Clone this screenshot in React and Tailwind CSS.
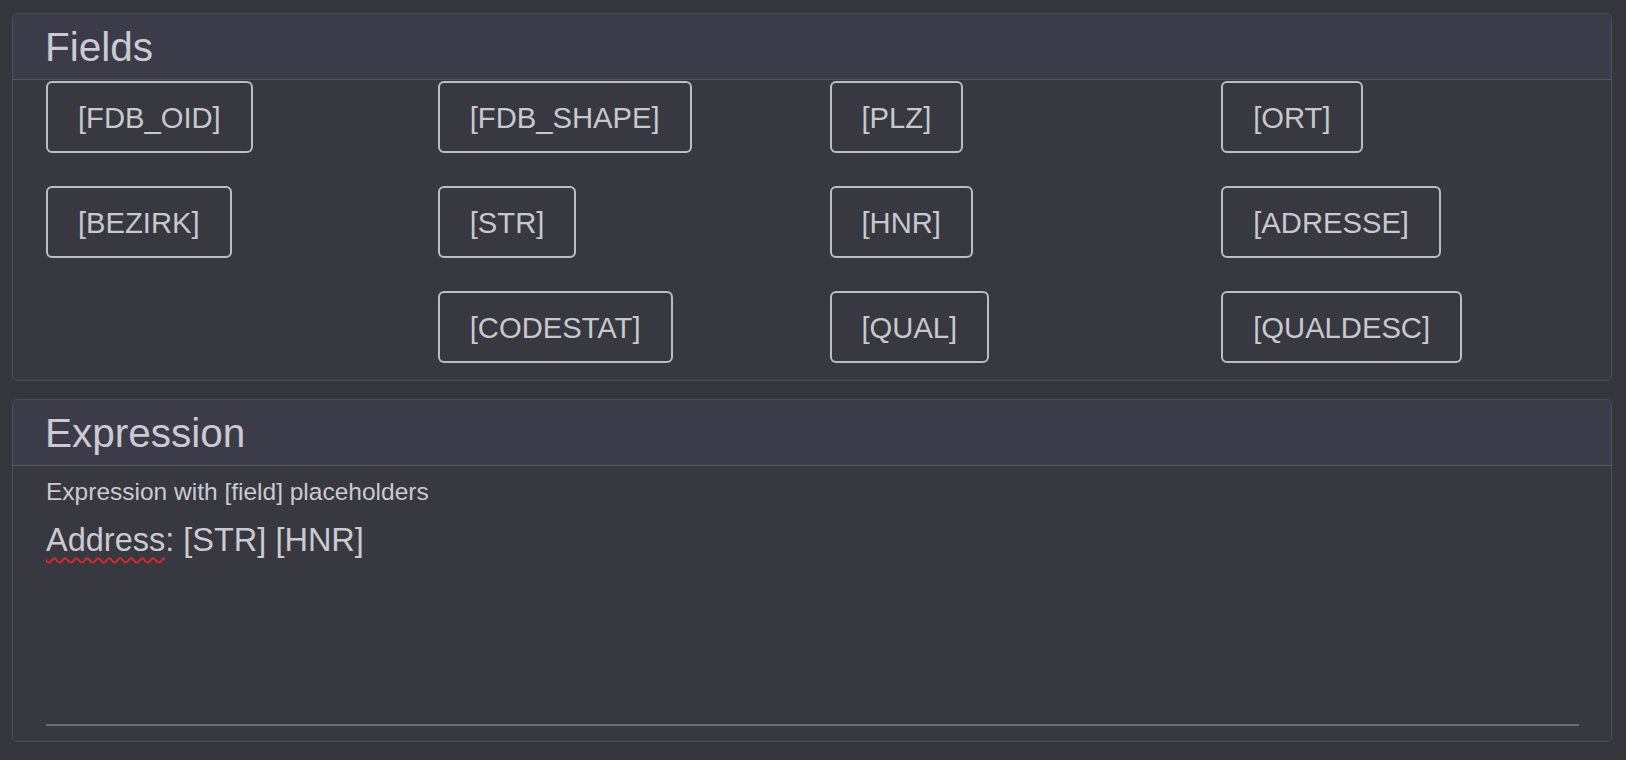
const fields = [
  "[FDB_OID]",
  "[FDB_SHAPE]",
  "[PLZ]",
  "[ORT]",
  "[BEZIRK]",
  "[STR]",
  "[HNR]",
  "[ADRESSE]",
  null,
  "[CODESTAT]",
  "[QUAL]",
  "[QUALDESC]",
];

function Panel({ title, children, bodyClass }) {
  return (
    <section className="rounded-[5px] border border-[#4e4e56] bg-[#383840]">
      <header className="h-[66px] flex items-center pl-8 border-b border-[#55555e] bg-[#3c3b49] rounded-t-[5px]">
        <h2 className="text-[40.5px] leading-[46px] text-[#cacad0]">{title}</h2>
      </header>
      <div className={bodyClass}>{children}</div>
    </section>
  );
}

export default function App() {
  return (
    <div className="min-h-screen bg-[#35353c] pl-3 pr-[14px] pt-[13px] pb-[18px] flex flex-col gap-[18px] font-['Liberation_Sans',Arial,sans-serif]">
      <Panel title="Fields" bodyClass="pl-[33px] pr-8 pt-[1px] pb-[17px] grid grid-cols-4 gap-x-[34px] gap-y-[33px]">
        {fields.map((f, i) =>
          f ? (
            <div key={i} className="flex">
              <button className="h-[72px] px-[30px] pt-[4px] border-2 border-[#bdbdc2] rounded-[6px] text-[29.2px] text-[#c8c8cf] bg-transparent">
                {f}
              </button>
            </div>
          ) : (
            <div key={i} />
          )
        )}
      </Panel>
      <Panel title="Expression" bodyClass="pl-[33px] pr-8 pt-3 pb-[15px]">
        <label className="block text-[24.5px] leading-[27.6px] text-[#cacad0]">
          Expression with [field] placeholders
        </label>
        <div className="mt-[16px] h-[204px] border-b-2 border-[#6c6c73] text-[32.5px] leading-[37px] text-[#cacad0]">
          <span className="underline decoration-wavy decoration-[#e3262a] underline-offset-[6px] decoration-[1.5px]">Address</span>
          : [STR] [HNR]
        </div>
      </Panel>
    </div>
  );
}
